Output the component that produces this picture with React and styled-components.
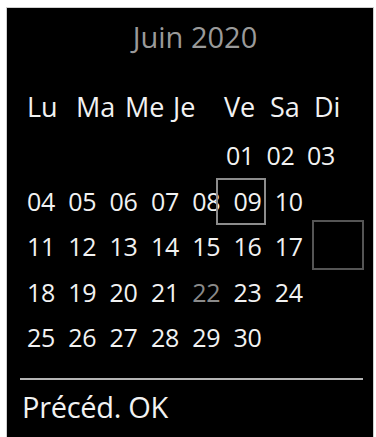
import React from 'react';
import styled, { createGlobalStyle } from 'styled-components';

const GlobalStyle = createGlobalStyle`
  html, body {
    margin: 0;
    padding: 0;
    background: #fff;
  }
  body {
    font-family: "Open Sans", "Noto Sans", sans-serif;
  }
`;

const Screen = styled.div`
  box-sizing: border-box;
  margin: 7px 0 0 6px;
  width: 368px;
  height: 430px;
  background: #000;
  border: 1px solid #cfcfcf;
  border-bottom: none;
  color: #f2f2f2;
  overflow: hidden;
`;

const Title = styled.div`
  margin-top: 9px;
  padding-left: 10px;
  height: 40px;
  line-height: 40px;
  font-size: 29px;
  text-align: center;
  color: #9a9a9a;
`;

const DayNames = styled.div`
  display: grid;
  grid-template-columns: 49px 49px 48px 51px 46px 44px auto;
  margin-top: 30px;
  padding-left: 20px;
  height: 40px;
  line-height: 40px;
  font-size: 27px;
`;

const Days = styled.div`
  margin-top: 6px;
`;

const Week = styled.div`
  display: grid;
  grid-template-columns: repeat(7, ${(p) => p.$step}px) auto;
  padding-left: ${(p) => p.$start}px;
  height: 45.5px;
  line-height: 45.5px;
  font-size: 25px;
  letter-spacing: -0.3px;
`;

const Day = styled.span`
  position: relative;
  color: ${(p) => (p.$dim ? '#8a8a8a' : '#f2f2f2')};
`;

const Cursor = styled.span`
  position: absolute;
  left: -17px;
  top: -1px;
  width: 50px;
  height: 47px;
  box-sizing: border-box;
  border: 2px solid #8c8c8c;
`;

const EmptySlot = styled.span`
  box-sizing: border-box;
  width: 52px;
  height: 50px;
  margin: -4px 0 0 -4px;
  border: 2px solid #555;
`;

const Divider = styled.div`
  margin: 17px 10px 0 13px;
  height: 2px;
  background: #b4b4b4;
`;

const Softkeys = styled.div`
  margin-top: 7px;
  padding-left: 15px;
  height: 40px;
  line-height: 40px;
  font-size: 29px;
  letter-spacing: -0.3px;
`;

const names = ['Lu', 'Ma', 'Me', 'Je', 'Ve', 'Sa', 'Di'];

const weeks = [
  ['04', '05', '06', '07', '08', '09', '10'],
  ['11', '12', '13', '14', '15', '16', '17'],
  ['18', '19', '20', '21', '22', '23', '24'],
  ['25', '26', '27', '28', '29', '30'],
];

const App = () => {
  return (<>
    <GlobalStyle />
    <Screen>
      <Title>{'Juin 2020'}</Title>
      <DayNames>
        {names.map((n) => <span key={n}>{n}</span>)}
      </DayNames>
      <Days>
        <Week $start={219} $step={40.5}>
          <Day>{'01'}</Day>
          <Day>{'02'}</Day>
          <Day>{'03'}</Day>
        </Week>
        {weeks.map((w, i) => (
          <Week key={i} $start={20} $step={41.3}>
            {w.map((d) => (
              <Day key={d} $dim={d === '22'}>
                {d === '09' && <Cursor />}
                {d}
              </Day>
            ))}
            {i === 1 && <EmptySlot />}
          </Week>
        ))}
      </Days>
      <Divider />
      <Softkeys>{'Précéd. OK'}</Softkeys>
    </Screen>
  </>);
};

export default App;
